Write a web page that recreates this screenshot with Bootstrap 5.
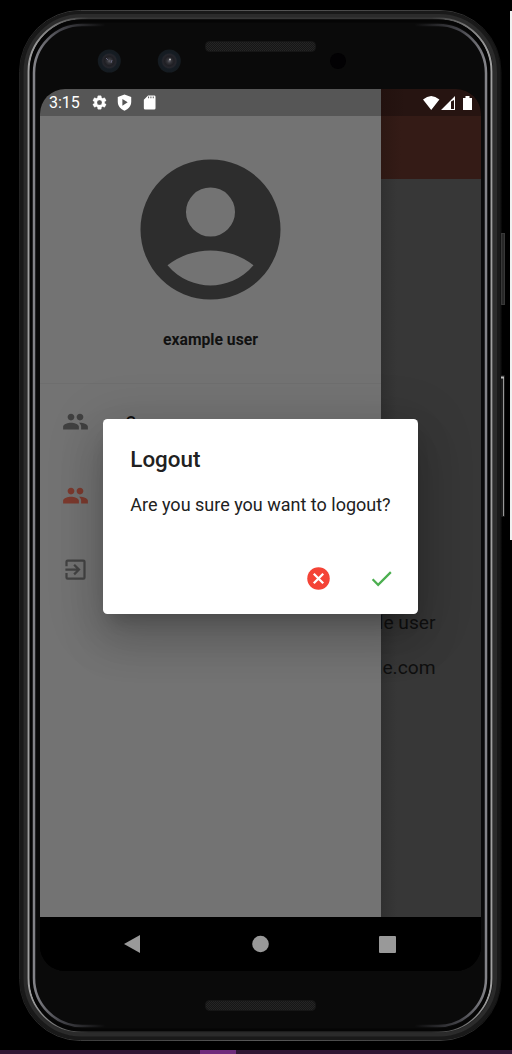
<!DOCTYPE html>
<html lang="en">
<head>
<meta charset="utf-8">
<meta name="viewport" content="width=device-width, initial-scale=1">
<title>Logout</title>
<link href="https://cdn.jsdelivr.net/npm/bootstrap@5.3.0/dist/css/bootstrap.min.css" rel="stylesheet">
<style>
body{background:#000;font-family:Roboto,sans-serif;height:1054px;line-height:1.2}
svg{display:block;flex:none}
.stage{width:512px;height:1054px}
.chassis{left:0;top:0}
.screen{width:441px;height:882px;margin:89px 0 0 40px;border-radius:25px;background:#000}
.status{height:27px;color:#fff;font-size:16px;background:linear-gradient(90deg,#565656 341px,#22110e 341px,#261411 365px)}
.clock{width:42px;padding-top:1px}
.status-left{padding-left:9px}
.status-left svg+svg{margin-left:8px}
.radio{margin-right:8px}
.view{height:801px}
.drawer{width:341px;background:#737373;z-index:1}
.profile{height:268px;padding-top:43px;border-bottom:1px solid #6e6e6e}
.profile p{font-size:15.7px;font-weight:700;color:#111;margin:31px 0 0}
.menu a{height:74px;padding-left:22px;gap:36.5px;font-size:15.7px;font-weight:500;color:#0e0e0e;text-decoration:none}
.menu span{padding-top:5px}
.page{width:100px;background:linear-gradient(90deg,#303030,#373737 16px)}
.appbar{height:63px;background:linear-gradient(90deg,#2d1813,#341b16 20px)}
.facts{margin:432px 45.500px 0 0;font-size:19.2px;color:#101010;line-height:24px;white-space:nowrap}
.facts div+div{margin-top:21px}
.confirm{left:63px;top:330px;width:315px;height:195px;border-radius:4.5px;padding:27px 23.3px 0 27.3px;z-index:3;color:#212121;
box-shadow:0 12px 17px -8px rgba(0,0,0,.2),0 27px 43px 3px rgba(0,0,0,.14),0 10px 52px 9px rgba(0,0,0,.12)}
.confirm h1{font-size:22.4px;line-height:27px;font-weight:500;margin:0}
.confirm p{font-size:18px;line-height:27px;margin:18px 0 0;white-space:nowrap}
.choices{margin-top:46.6px;gap:36px}
.navkeys{height:54px;background:#000}
.tasks{left:0;bottom:0;width:512px;height:4px;background:#301733}
.tasks div{width:36px;height:4px;margin-left:200px;background:#6f2c7c}
.pane-edge{left:510px;top:11px;width:2px;height:529px;background:#f1f1f1}
</style>
</head>
<body>
<div class="stage position-relative overflow-hidden">
<svg class="chassis position-absolute" width="512" height="1054" fill="none">
<defs>
<linearGradient id="rim" gradientUnits="userSpaceOnUse" x1="28" x2="492" y1="0" y2="0"><stop stop-color="#a0a0a0"/><stop offset=".05" stop-color="#7a7a7a"/><stop offset=".13" stop-color="#373737"/><stop offset=".87" stop-color="#373737"/><stop offset=".95" stop-color="#7a7a7a"/><stop offset="1" stop-color="#a0a0a0"/></linearGradient>
<linearGradient id="lip" gradientUnits="userSpaceOnUse" x1="33" x2="487" y1="0" y2="0"><stop stop-color="#85858a"/><stop offset=".06" stop-color="#45454b"/><stop offset=".16" stop-color="#0a0a0a"/><stop offset=".84" stop-color="#0a0a0a"/><stop offset=".94" stop-color="#45454b"/><stop offset="1" stop-color="#85858a"/></linearGradient>
<linearGradient id="edge" gradientUnits="userSpaceOnUse" x1="19" x2="501" y1="0" y2="0"><stop stop-color="#202020"/><stop offset=".1" stop-color="#3a3a3a"/><stop offset=".5" stop-color="#575757"/><stop offset=".9" stop-color="#3a3a3a"/><stop offset="1" stop-color="#111"/></linearGradient>
<linearGradient id="foot" x1="0" x2="1"><stop stop-color="#444"/><stop offset=".5" stop-color="#aaa"/><stop offset="1" stop-color="#444"/></linearGradient>
<radialGradient id="lens"><stop stop-color="#5c5c66"/><stop offset=".18" stop-color="#343439"/><stop offset=".4" stop-color="#1f1f24"/><stop offset=".58" stop-color="#26262c"/><stop offset=".7" stop-color="#151c23"/><stop offset="1" stop-color="#151b20"/></radialGradient>
<pattern id="mesh" width="2" height="2" patternUnits="userSpaceOnUse"><rect width="2" height="2" fill="#161616"/><path d="M0 0h1v1H0zM1 1h1v1H1z" fill="#252525"/></pattern>
</defs>
<rect x="19.500" y="10.500" width="481.500" height="1030" rx="61" fill="#080808" stroke="url(#edge)"/>
<rect x="22" y="13" width="476.500" height="1025" rx="59" stroke="#191919" stroke-width="4"/>
<rect x="25.500" y="16" width="469.500" height="1018.500" rx="56" stroke="#2b2b2b" stroke-width="4"/>
<rect x="28.500" y="18.500" width="463" height="1013" rx="53" fill="#000" stroke="url(#rim)" stroke-width="2"/>
<rect x="31.500" y="21" width="457" height="1009" rx="50" fill="#0a0a0a" stroke="#050505" stroke-width="3"/>
<rect x="34" y="25" width="452" height="1001" rx="48" fill="#0a0a0a" stroke="url(#lip)" stroke-width="2.500"/>
<path d="M232 1040.500h58" stroke="url(#foot)"/>
<rect x="205.500" y="41.500" width="110" height="10" rx="4" fill="url(#mesh)" stroke="#161616"/>
<rect x="205.500" y="1000.500" width="110" height="10" rx="4" fill="url(#mesh)" stroke="#161616"/>
<circle cx="109.300" cy="61" r="11.500" fill="url(#lens)"/><circle cx="169.300" cy="61" r="11.500" fill="url(#lens)"/>
<path d="M106 58l2 2M111 63l1-3" stroke="#64647b"/><circle cx="170" cy="59.500" r="1" fill="#bbb"/>
<circle cx="338" cy="61" r="8" fill="#020103"/>
<rect x="501.500" y="233.500" width="3" height="71" fill="#282828" stroke="#383838"/>
<rect x="501" y="375" width="4" height="142" rx="1" fill="#1c1c1c"/><path d="M503.500 378V516" stroke="#999"/><path d="M501 377.500h3" stroke="#bbb" stroke-width="2"/>
</svg>
<div class="pane-edge position-absolute"></div>

<main class="screen position-absolute overflow-hidden">
<header class="status d-flex align-items-center justify-content-between">
<div class="status-left d-flex align-items-center">
<span class="clock">3:15</span>
<svg width="17" height="17" viewBox="0 0 24 24" fill="#fff"><path d="M19.140 12.940c.04-.3.06-.61.06-.94s-.02-.64-.07-.94l2.030-1.580a.49.490 0 0 0 .12-.61l-1.920-3.320a.488.488 0 0 0-.59-.22l-2.390.96c-.5-.38-1.030-.7-1.620-.94l-.36-2.540A.484.484 0 0 0 13.920 2.400h-3.840c-.24 0-.43.17-.47.41l-.36 2.540c-.59.24-1.130.57-1.620.94l-2.390-.96c-.22-.08-.47 0-.59.22L2.740 8.870c-.12.210-.08.470.12.61l2.030 1.580c-.05.3-.09.630-.09.94s.02.640.07.940l-2.030 1.580a.49.490 0 0 0-.12.610l1.920 3.320c.12.220.37.290.59.220l2.390-.96c.5.380 1.030.7 1.620.94l.36 2.540c.05.240.24.410.48.410h3.840c.24 0 .44-.17.47-.41l.36-2.540c.59-.24 1.130-.56 1.620-.94l2.390.96c.22.080.47 0 .59-.22l1.920-3.320a.49.490 0 0 0-.12-.61zM12 15.600a3.600 3.600 0 1 1 0-7.200 3.600 3.600 0 0 1 0 7.200z" stroke="#fff" stroke-width=".5"/></svg>
<svg width="17" height="17" viewBox="0 0 24 24" fill="#fff"><path fill-rule="evenodd" d="M12 .8 2.500 4.300V11c0 6 4 10.500 9.500 12.500 5.500-2 9.500-6.500 9.500-12.500V4.300zM9 7v9.500l7.500-4.800z"/></svg>
<svg width="17" height="17" viewBox="0 0 24 24" fill="#fff"><path fill-rule="evenodd" d="M18 2h-8L4 8v12a2 2 0 0 0 2 2h12.500a2 2 0 0 0 2-2V4a2 2 0 0 0-2-2zM10 3.500V6h1.400V3.500zm3.300 0V6h1.400V3.500zm3.300 0V6H18V3.500z"/></svg>
</div>
<svg class="radio" width="50" height="16" viewBox="0 0 50 16" fill="#fff"><path d="M0 4.500Q8.200-2.500 16.400 4.500L8.200 15zM18 15 32 1v14zM28 6.500V14h3V5zM40 3h2.500V1h4v2H49v12h-9z" fill-rule="evenodd"/></svg>
</header>
<div class="view d-flex">
<nav class="drawer flex-shrink-0">
<div class="profile d-flex flex-column align-items-center">
<svg width="141" height="141" viewBox="1.930 1.930 20.140 20.140" fill="#2d2d2d"><path fill-rule="evenodd" d="M12 2a10 10 0 1 0 0 20 10 10 0 0 0 0-20zm0 4a3.500 3.500 0 1 1 0 7 3.500 3.500 0 0 1 0-7zm0 14c-2.030 0-4.430-.82-6.140-2.880a9.950 9.950 0 0 1 12.280 0C16.430 19.180 14.030 20 12 20z"/></svg>
<p>example user</p>
</div>
<div class="menu d-flex flex-column">
<a href="#" class="d-flex align-items-center"><svg width="27" height="27" viewBox="0 0 24 24" fill="#404040"><path d="M16 11c1.660 0 2.990-1.340 2.990-3S17.660 5 16 5s-3 1.340-3 3 1.340 3 3 3zm-8 0c1.660 0 2.990-1.340 2.990-3S9.660 5 8 5 5 6.340 5 8s1.340 3 3 3zm0 2c-2.330 0-7 1.170-7 3.500V19h14v-2.500c0-2.330-4.670-3.500-7-3.500zm8 0c-.29 0-.62.02-.97.050 1.160.84 1.970 1.970 1.970 3.450V19h6v-2.500c0-2.330-4.670-3.500-7-3.500z"/></svg><span>Groups</span></a>
<a href="#" class="d-flex align-items-center"><svg width="27" height="27" viewBox="0 0 24 24" fill="#7c3a2e"><path d="M16 11c1.660 0 2.990-1.340 2.990-3S17.660 5 16 5s-3 1.340-3 3 1.340 3 3 3zm-8 0c1.660 0 2.990-1.340 2.990-3S9.660 5 8 5 5 6.340 5 8s1.340 3 3 3zm0 2c-2.330 0-7 1.170-7 3.500V19h14v-2.500c0-2.330-4.670-3.500-7-3.500zm8 0c-.29 0-.62.02-.97.050 1.160.84 1.970 1.970 1.970 3.450V19h6v-2.500c0-2.330-4.670-3.500-7-3.500z"/></svg></a>
<a href="#" class="d-flex align-items-center"><svg width="27" height="27" viewBox="0 0 24 24" fill="#434343"><path d="M10.090 15.590 11.500 17l5-5-5-5-1.410 1.410L12.670 11H3v2h9.670zM19 3H5a2 2 0 0 0-2 2v4h2V5h14v14H5v-4H3v4a2 2 0 0 0 2 2h14a2 2 0 0 0 2-2V5a2 2 0 0 0-2-2z"/></svg></a>
</div>
</nav>
<section class="page">
<div class="appbar"></div>
<div class="facts d-flex flex-column align-items-end"><div>example user</div><div>user@example.com</div></div>
</section>
</div>
<footer class="navkeys d-flex">
<svg width="441" height="54" viewBox="0 0 441 54" fill="#999"><path d="M84 27 100 18v18z"/><circle cx="220.500" cy="27" r="8.300"/><rect x="339" y="19" width="17" height="17" rx="1"/></svg>
</footer>
<div class="confirm position-absolute bg-white" role="dialog">
<h1>Logout</h1>
<p>Are you sure you want to logout?</p>
<div class="choices d-flex justify-content-end">
<svg width="27" height="27" viewBox="0 0 24 24" fill="#f44336"><path d="M12 2a10 10 0 1 0 0 20 10 10 0 0 0 0-20z"/><path d="m7.800 7.800 8.400 8.400m0-8.400-8.400 8.400" stroke="#fff" stroke-width="2"/></svg>
<svg width="27" height="27" viewBox="0 0 24 24" fill="#4caf50"><path d="M9 16.170 4.830 12l-1.420 1.410L9 19 21 7l-1.410-1.410z"/></svg>
</div>
</div>
</main>
<div class="tasks position-absolute"><div></div></div>
</div>
<script src="https://cdn.jsdelivr.net/npm/bootstrap@5.3.0/dist/js/bootstrap.bundle.min.js"></script>
</body>
</html>
